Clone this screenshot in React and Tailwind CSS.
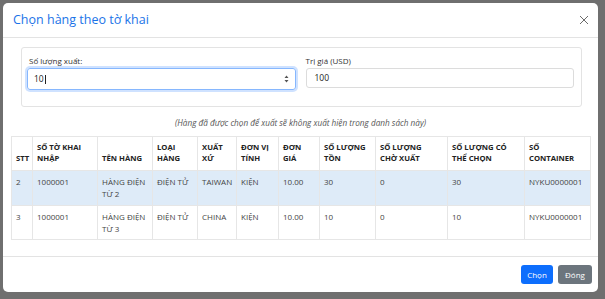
import React from "react";

const columns = [
  { label: ["STT"], w: "w-[21px]" },
  { label: ["SỐ TỜ KHAI", "NHẬP"], w: "w-[65px]" },
  { label: ["TÊN HÀNG"], w: "w-[55px]" },
  { label: ["LOẠI", "HÀNG"], w: "w-[45px]" },
  { label: ["XUẤT", "XỨ"], w: "w-[39px]" },
  { label: ["ĐƠN VỊ", "TÍNH"], w: "w-[42px]" },
  { label: ["ĐƠN", "GIÁ"], w: "w-[41px]" },
  { label: ["SỐ LƯỢNG", "TỒN"], w: "w-[56px]" },
  { label: ["SỐ LƯỢNG", "CHỜ XUẤT"], w: "w-[72px]" },
  { label: ["SỐ LƯỢNG CÓ", "THỂ CHỌN"], w: "w-[77px]" },
  { label: ["SỐ", "CONTAINER"], w: "w-[66px]" },
];

const rows = [
  ["2", "1000001", ["HÀNG ĐIỆN", "TỪ 2"], "ĐIỆN TỬ", "TAIWAN", "KIỆN", "10.00", "30", "0", "30", "NYKU0000001"],
  ["3", "1000001", ["HÀNG ĐIỆN", "TỪ 3"], "ĐIỆN TỬ", "CHINA", "KIỆN", "10.00", "10", "0", "10", "NYKU0000001"],
];

export default function App() {
  return (
    <div
      className="w-[605px] h-[299px] bg-[#6f6f6f] pt-[3px] pl-[3px] overflow-hidden"
      style={{ fontFamily: '"Open Sans", "Noto Sans", sans-serif' }}
    >
      <div className="w-[595px] h-[289px] bg-white rounded-[5px] flex flex-col">
        {/* Header */}
        <div className="h-[35px] border-b border-[#e3e3e3] flex items-center justify-between pl-[10px] pr-[8px]">
          <h2 className="text-[12.5px] font-medium text-[#1a73e8] leading-none">Chọn hàng theo tờ khai</h2>
          <svg width="10" height="10" viewBox="0 0 10 10" className="mr-[1px]">
            <path d="M1 1L9 9M9 1L1 9" stroke="#6b6b6b" strokeWidth="1" />
          </svg>
        </div>

        {/* Body */}
        <div className="flex-1 px-[8px] pt-[9px]">
          <div className="ml-[10px] mr-[8px] h-[60px] border border-[#e3e3e3] rounded-[3px] pt-[8px] pl-[5px] pr-[7px] flex gap-[10px]">
            <div className="flex-1">
              <div className="text-[8px] text-[#333] leading-[10px] mb-[2px] pl-[2px]">Số lượng xuất:</div>
              <div className="h-[22px] border border-[#86b7fe] rounded-[3px] shadow-[0_0_0_2px_rgba(13,110,253,0.2)] flex items-center justify-between px-[6px]">
                <span className="text-[8.5px] text-[#222]">10<span className="inline-block w-px h-[9px] bg-[#222] align-middle ml-px" /></span>
                <svg width="5" height="8" viewBox="0 0 5 8">
                  <path d="M2.5 0.5L4.5 3H0.5Z M2.5 7.5L4.5 5H0.5Z" fill="#555" />
                </svg>
              </div>
            </div>
            <div className="flex-1">
              <div className="text-[8px] text-[#333] leading-[10px] mb-[2px]">Trị giá (USD)</div>
              <div className="h-[20px] border border-[#dcdcdc] rounded-[3px] flex items-center px-[8px]">
                <span className="text-[8.5px] text-[#222]">100</span>
              </div>
            </div>
          </div>

          <p className="text-center italic text-[8.2px] text-[#555] mt-[10px] mb-[8px] leading-[11px]">
            (Hàng đã được chọn để xuất sẽ không xuất hiện trong danh sách này)
          </p>

          <table className="border-collapse w-[579px] table-fixed text-[8px] text-[#444]">
            <thead>
              <tr className="h-[34px]">
                {columns.map((c, i) => (
                  <th
                    key={i}
                    className={`${c.w} border border-[#e6e6e6] font-bold text-left align-bottom px-[4px] pb-[6px] leading-[11px] text-[7.7px] text-[#222]`}
                  >
                    {c.label.map((l, j) => (
                      <div key={j}>{l}</div>
                    ))}
                  </th>
                ))}
              </tr>
            </thead>
            <tbody>
              {rows.map((r, ri) => (
                <tr key={ri} className={ri === 0 ? "bg-[#deebf8] h-[35px]" : "bg-white h-[34px]"}>
                  {r.map((v, ci) => (
                    <td
                      key={ci}
                      className="border border-[#e6e6e6] align-top px-[4px] pt-[5px] leading-[12px]"
                    >
                      {Array.isArray(v) ? v.map((l, j) => <div key={j}>{l}</div>) : v}
                    </td>
                  ))}
                </tr>
              ))}
            </tbody>
          </table>
        </div>

        {/* Footer */}
        <div className="h-[36px] border-t border-[#e3e3e3] flex items-center justify-end gap-[5px] pr-[6px]">
          <button className="h-[19px] w-[32px] rounded-[3px] bg-[#0d6efd] text-white text-[8px]">Chọn</button>
          <button className="h-[19px] w-[34px] rounded-[3px] bg-[#6c757d] text-white text-[8px]">Đóng</button>
        </div>
      </div>
    </div>
  );
}
